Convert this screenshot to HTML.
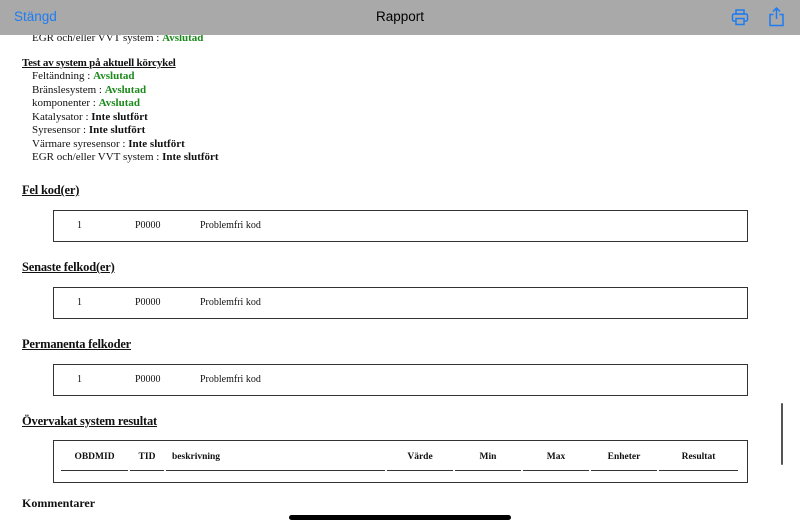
<!DOCTYPE html>
<html><head><meta charset="utf-8"><style>
*{margin:0;padding:0;box-sizing:border-box}
body{width:800px;height:525px;overflow:hidden;background:#fff;position:relative;font-family:"Liberation Serif",serif;color:#111}
.t{position:absolute;font-size:11px;white-space:nowrap;line-height:13px}
.g{color:#1a8a1a;font-weight:bold}
.b{font-weight:bold}
.h{position:absolute;left:22px;font-size:12.5px;font-weight:bold;text-decoration:underline;white-space:nowrap;line-height:15px;letter-spacing:-0.2px}
.box{position:absolute;left:53px;width:695px;border:1px solid #333}
.row{position:absolute;font-size:10px;white-space:nowrap;line-height:12px}
.th{position:absolute;top:10px;font-size:9.5px;font-weight:bold;text-align:center;border-bottom:1px solid #333;padding-top:1px;height:20px}
</style></head><body>
<div style="position:absolute;left:0;top:0;width:800px;height:35px;background:#a9a9a9;z-index:2">
<div style="position:absolute;left:14px;top:9px;font-family:'Liberation Sans',sans-serif;font-size:13.5px;color:#1e7cf2">Stängd</div>
<div style="position:absolute;left:0;width:800px;top:9px;text-align:center;font-family:'Liberation Sans',sans-serif;font-size:13.5px;color:#000">Rapport</div>
<svg style="position:absolute;left:731px;top:9px" width="18" height="17" viewBox="0 0 18 17" fill="none" stroke="#1e7cf2" stroke-width="1.5"><rect x="5" y="1" width="8" height="4"/><rect x="1.5" y="5" width="15" height="7" rx="1.5"/><rect x="5" y="9.5" width="8" height="6" fill="#a9a9a9"/></svg>
<svg style="position:absolute;left:768px;top:7px" width="17" height="20" viewBox="0 0 17 20" fill="none" stroke="#1e7cf2" stroke-width="1.5"><path d="M8.5 1v11M5 4.5l3.5-3.5 3.5 3.5M5.5 7.5H2v11h13v-11h-3.5"/></svg>
</div>
<div class="t" style="left:32px;top:32px">EGR och/eller VVT system : <span class="g">Avslutad</span></div>
<div class="t b" style="left:22px;top:57px;text-decoration:underline;letter-spacing:-0.2px">Test av system på aktuell körcykel</div>
<div class="t" style="left:32px;top:70px">Feltändning : <span class="g">Avslutad</span></div>
<div class="t" style="left:32px;top:84px">Bränslesystem : <span class="g">Avslutad</span></div>
<div class="t" style="left:32px;top:97px">komponenter : <span class="g">Avslutad</span></div>
<div class="t" style="left:32px;top:111px">Katalysator : <span class="b">Inte slutfört</span></div>
<div class="t" style="left:32px;top:124px">Syresensor : <span class="b">Inte slutfört</span></div>
<div class="t" style="left:32px;top:138px">Värmare syresensor : <span class="b">Inte slutfört</span></div>
<div class="t" style="left:32px;top:151px">EGR och/eller VVT system : <span class="b">Inte slutfört</span></div>

<div class="h" style="top:183px">Fel kod(er)</div>
<div class="box" style="top:210px;height:32px"><span class="row" style="left:23px;top:9px">1</span><span class="row" style="left:81px;top:9px">P0000</span><span class="row" style="left:146px;top:9px">Problemfri kod</span></div>
<div class="h" style="top:260px">Senaste felkod(er)</div>
<div class="box" style="top:287px;height:32px"><span class="row" style="left:23px;top:9px">1</span><span class="row" style="left:81px;top:9px">P0000</span><span class="row" style="left:146px;top:9px">Problemfri kod</span></div>
<div class="h" style="top:337px">Permanenta felkoder</div>
<div class="box" style="top:364px;height:32px"><span class="row" style="left:23px;top:9px">1</span><span class="row" style="left:81px;top:9px">P0000</span><span class="row" style="left:146px;top:9px">Problemfri kod</span></div>
<div class="h" style="top:414px">Övervakat system resultat</div>
<div class="box" style="top:440px;height:43px">
<div class="th" style="left:7px;width:67px">OBDMID</div>
<div class="th" style="left:76px;width:34px">TID</div>
<div class="th" style="left:112px;width:219px;text-align:left;padding-left:6px">beskrivning</div>
<div class="th" style="left:333px;width:66px">Värde</div>
<div class="th" style="left:401px;width:66px">Min</div>
<div class="th" style="left:469px;width:66px">Max</div>
<div class="th" style="left:537px;width:66px">Enheter</div>
<div class="th" style="left:605px;width:79px">Resultat</div>
</div>
<div class="t b" style="left:22px;top:497px;font-size:12px">Kommentarer</div>
<div style="position:absolute;left:781px;top:403px;width:2px;height:62px;background:#555;border-radius:1px"></div>
<div style="position:absolute;left:289px;top:515px;width:222px;height:5px;background:#000;border-radius:3px"></div>
</body></html>
